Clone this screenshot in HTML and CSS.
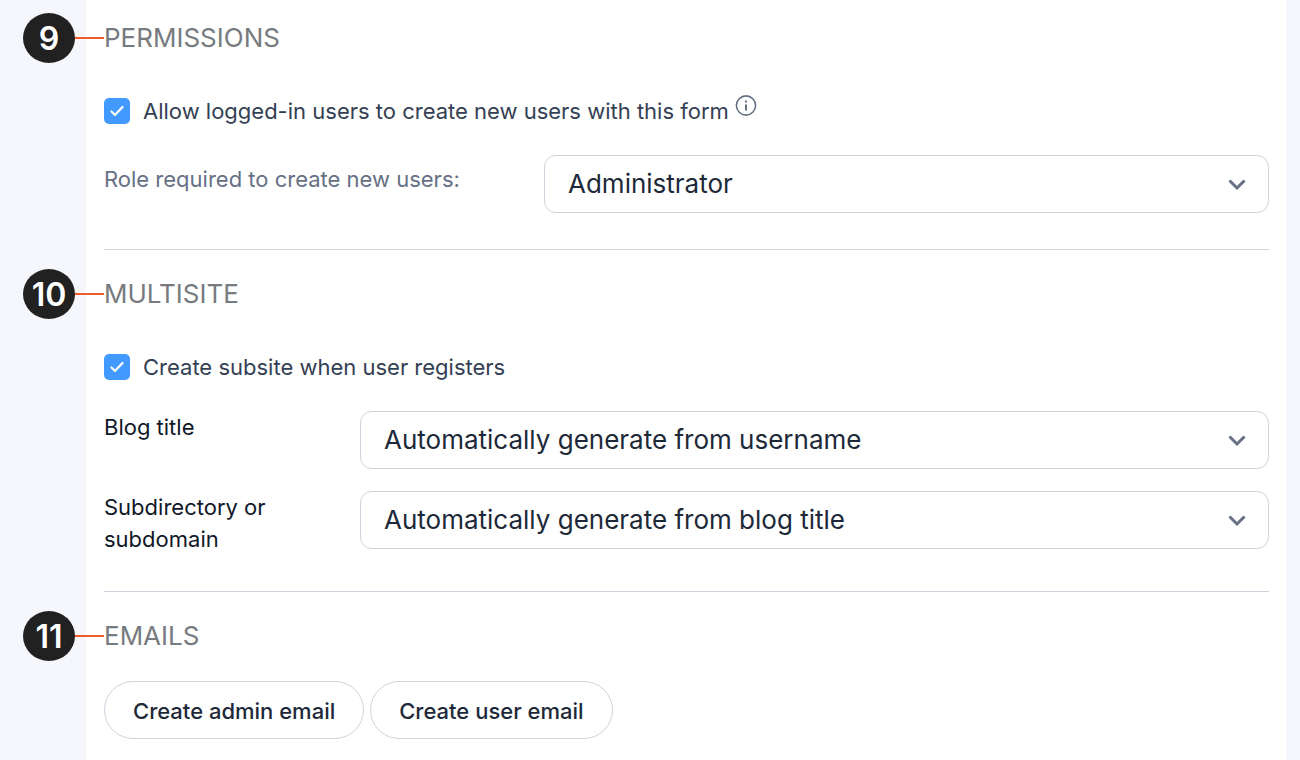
FILE: index.html
```
<!DOCTYPE html>
<html lang="en">
<head>
  <meta charset="UTF-8" />
  <meta name="viewport" content="width=device-width, initial-scale=1.0"/>
  <title>Registration Form Settings</title>
  <link rel="stylesheet" href="styles.css">
</head>
<body>

  <main class="panel">

    <section class="section">
      <h2 class="section-title"><span class="step">9</span><span class="step-line"></span>PERMISSIONS</h2>

      <div class="check-row">
        <input type="checkbox" id="allow-create" checked>
        <label for="allow-create">Allow logged-in users to create new users with this form</label>
        <svg class="info" viewBox="0 0 22 22" fill="none" stroke="currentColor" stroke-width="1.6">
          <circle cx="11" cy="10.500" r="9.6"/>
          <path d="M11 9.500v6" stroke-width="2"/>
          <path d="M11 5.500v2" stroke-width="2"/>
        </svg>
      </div>

      <div class="field field-wide">
        <label for="role">Role required to create new users:</label>
        <div class="select-box">
          <select id="role">
            <option>Administrator</option>
          </select>
          <svg class="chevron" viewBox="0 0 18 12" fill="none" stroke="currentColor" stroke-width="3"><path d="M1.500 1.500 9 9l7.500-7.500"/></svg>
        </div>
      </div>
    </section>

    <section class="section">
      <h2 class="section-title"><span class="step">10</span><span class="step-line"></span>MULTISITE</h2>

      <div class="check-row">
        <input type="checkbox" id="create-subsite" checked>
        <label for="create-subsite">Create subsite when user registers</label>
      </div>

      <div class="field">
        <label for="blog-title">Blog title</label>
        <div class="select-box">
          <select id="blog-title">
            <option>Automatically generate from username</option>
          </select>
          <svg class="chevron" viewBox="0 0 18 12" fill="none" stroke="currentColor" stroke-width="3"><path d="M1.500 1.500 9 9l7.500-7.500"/></svg>
        </div>
      </div>

      <div class="field">
        <label for="subdomain">Subdirectory or subdomain</label>
        <div class="select-box">
          <select id="subdomain">
            <option>Automatically generate from blog title</option>
          </select>
          <svg class="chevron" viewBox="0 0 18 12" fill="none" stroke="currentColor" stroke-width="3"><path d="M1.500 1.500 9 9l7.500-7.500"/></svg>
        </div>
      </div>
    </section>

    <section class="section">
      <h2 class="section-title"><span class="step">11</span><span class="step-line"></span>EMAILS</h2>

      <div class="buttons">
        <button type="button">Create admin email</button>
        <button type="button">Create user email</button>
      </div>
    </section>

  </main>

</body>
</html>
```
FILE: styles.css
```
* {
  box-sizing: border-box;
}

body {
  margin: 0;
  background: #f6f7fc;
  color: #1d2939;
  font-family: Inter, "Liberation Sans", sans-serif;
  font-size: 22px;
  line-height: 32px;
}

.panel {
  min-height: 100vh;
  margin: 0 14px 0 86px;
  padding: 13px 17px 20px 18px;
  background: #fff;
}

.section {
  padding-bottom: 36px;
}

.section + .section {
  padding-top: 19px;
  border-top: 1px solid #d0d3de;
}

.section:last-child {
  padding-bottom: 0;
}

/* the step number hangs out to the left of the panel */
.section-title {
  display: flex;
  align-items: center;
  margin: 0 0 32px -81px;
  color: #777b80;
  font-size: 26px;
  font-weight: 400;
}

.step {
  width: 52px;
  height: 50px;
  border-radius: 50%;
  background: #212121;
  color: #fff;
  font-size: 32px;
  font-weight: 600;
  line-height: 52px;
  text-align: center;
}

.step-line {
  width: 29px;
  height: 2px;
  background: #f15a29;
}

.check-row {
  display: flex;
  align-items: center;
  margin-bottom: 28px;
  color: #344054;
}

.check-row input {
  appearance: none;
  width: 26px;
  height: 26px;
  margin: 0 13px 0 0;
  border: 1px solid #d0d3de;
  border-radius: 5px;
}

.check-row input:checked {
  border: none;
  background: #4299ff url("data:image/svg+xml,%3Csvg xmlns='http://www.w3.org/2000/svg' viewBox='0 0 26 26' fill='none' stroke='white' stroke-width='2.2' stroke-linecap='round' stroke-linejoin='round'%3E%3Cpath d='M7.500 13.500l3.500 3.500 7.500-8'/%3E%3C/svg%3E");
}

.info {
  width: 22px;
  height: 22px;
  margin-left: 6px;
  align-self: flex-start;
  color: #667085;
}

.field {
  display: grid;
  grid-template-columns: 256px 1fr;
  align-items: start;
  color: #101828;
}

.field + .field {
  margin-top: 22px;
}

.field-wide {
  grid-template-columns: 440px 1fr;
  color: #667085;
}

.field-wide label {
  padding-top: 8px;
}

.select-box {
  position: relative;
}

.select-box select {
  appearance: none;
  display: block;
  width: 100%;
  height: 58px;
  padding: 0 64px 2px 23px;
  border: 1px solid #d0d3de;
  border-radius: 12px;
  background: #fff;
  color: #1d2939;
  font-family: inherit;
  font-size: 26px;
}

.chevron {
  position: absolute;
  top: 24px;
  right: 23px;
  width: 18px;
  height: 12px;
  color: #667085;
  pointer-events: none;
}

.section:last-child .section-title {
  margin-bottom: 20px;
}

.buttons {
  display: flex;
  gap: 6px;
}

.buttons button {
  height: 58px;
  padding: 2px 28px 0;
  border: 1px solid #d0d3de;
  border-radius: 29px;
  background: #fff;
  color: #1d2939;
  font-family: inherit;
  font-size: 22px;
  font-weight: 500;
}
```
